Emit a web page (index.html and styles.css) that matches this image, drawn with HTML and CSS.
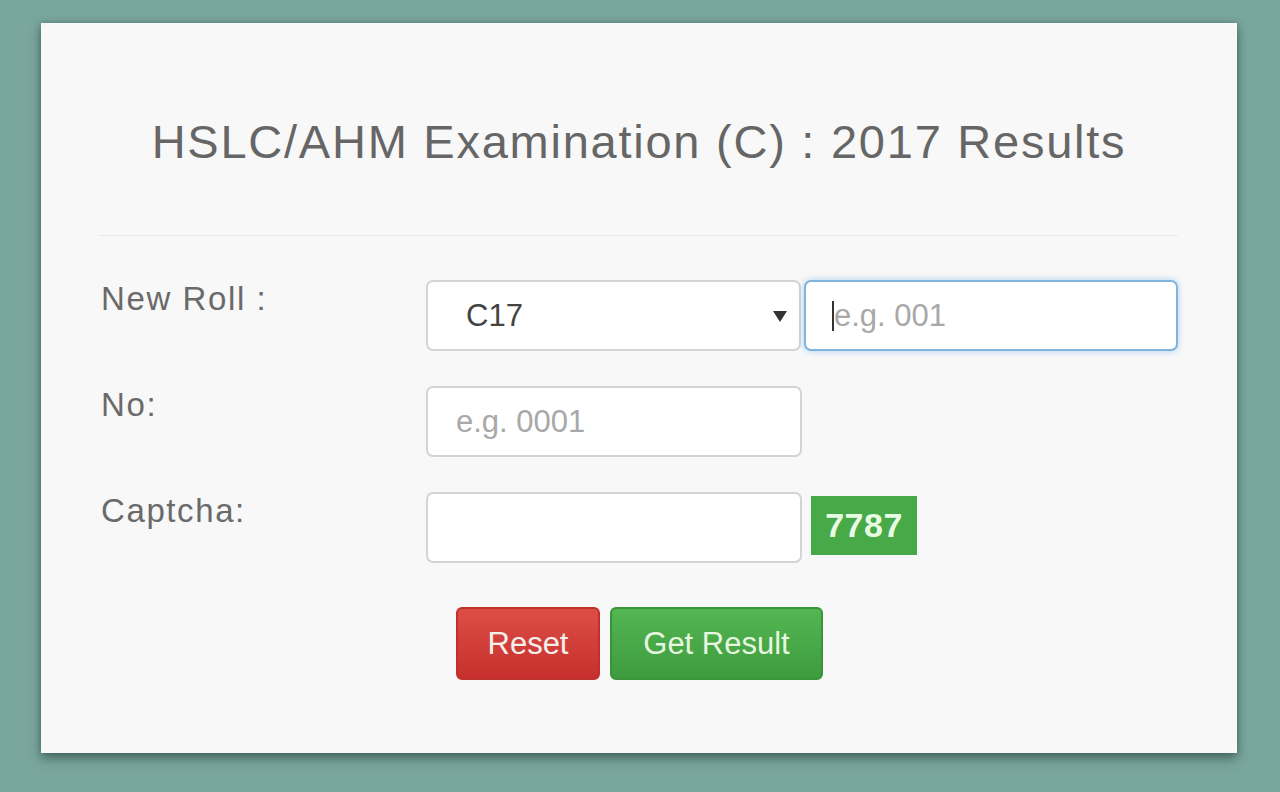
FILE: index.html
```html
<!DOCTYPE html>
<html>
<head>
<meta charset="utf-8">
<title>HSLC/AHM Examination (C) : 2017 Results</title>
<link rel="stylesheet" href="styles.css">
</head>
<body>
<div class="card">
  <h1 class="title">HSLC/AHM Examination (C) : 2017 Results</h1>
  <hr class="divider">
  <form class="form">
    <div class="row">
      <label class="label">New Roll :</label>
      <div class="controls">
        <div class="select-wrap">
          <select class="field select"><option>C17</option></select>
          <svg class="arrow" width="14" height="11" viewBox="0 0 14 11"><path d="M0 0 L14 0 L7 11 Z" fill="#333"/></svg>
        </div>
        <div class="focus-wrap">
          <input class="field focused" type="text" placeholder="e.g. 001">
          <span class="caret"></span>
        </div>
      </div>
    </div>
    <div class="row">
      <label class="label">No:</label>
      <div class="controls">
        <input class="field" type="text" placeholder="e.g. 0001">
      </div>
    </div>
    <div class="row">
      <label class="label">Captcha:</label>
      <div class="controls">
        <input class="field" type="text">
        <span class="captcha">7787</span>
      </div>
    </div>
    <div class="buttons">
      <button type="button" class="btn btn-reset">Reset</button>
      <button type="button" class="btn btn-get">Get Result</button>
    </div>
  </form>
</div>
</body>
</html>
```
FILE: styles.css
```css
html, body {
  margin: 0;
  padding: 0;
}
body {
  background: #79a69d;
  width: 1280px;
  height: 792px;
  overflow: hidden;
  font-family: "Liberation Sans", Arial, sans-serif;
  padding-top: 23px;
  padding-left: 41px;
  box-sizing: border-box;
}
.card {
  width: 1196px;
  height: 730px;
  background: #f8f8f8;
  box-sizing: border-box;
  padding: 0 59px 0 57px;
  box-shadow: 0 6px 10px rgba(40, 70, 60, 0.55), 0 0 6px rgba(40, 70, 60, 0.35);
}
.title {
  margin: 0;
  padding-top: 82px;
  height: 74px;
  line-height: 74px;
  text-align: center;
  font-weight: normal;
  font-size: 47px;
  letter-spacing: 1.75px;
  color: #666;
  padding-left: 2px;
}
.divider {
  margin: 56px 0 0 0;
  border: 0;
  border-top: 1px solid #e9e9e9;
  height: 0;
}
.form {
  margin-top: 44px;
}
.row {
  display: flex;
  align-items: flex-start;
  margin-bottom: 35px;
  height: 71px;
}
.label {
  width: 328px;
  padding-left: 3px;
  box-sizing: border-box;
  font-size: 33px;
  letter-spacing: 1.6px;
  color: #6a6a6a;
  line-height: 38px;
  padding-top: 0px;
}
.controls {
  display: flex;
  align-items: center;
  height: 71px;
  gap: 3px;
}
.field {
  width: 376px;
  height: 71px;
  box-sizing: border-box;
  border: 2px solid #d4d4d4;
  border-radius: 7px;
  background: #fff;
  font-family: "Liberation Sans", Arial, sans-serif;
  font-size: 31px;
  color: #555;
  padding: 0 28px;
  outline: none;
  margin: 0;
}
.field::placeholder {
  color: #a8a8a8;
}
.select-wrap {
  position: relative;
}
.select {
  appearance: none;
  -webkit-appearance: none;
  padding-left: 38px;
  color: #444;
  width: 375px;
}
.arrow {
  position: absolute;
  right: 14px;
  top: 31px;
}
.focus-wrap {
  position: relative;
}
.focused {
  width: 374px;
  border-color: #7fb4de;
  box-shadow: 0 0 6px rgba(102, 175, 233, 0.55);
}
.caret {
  position: absolute;
  left: 28px;
  top: 21px;
  width: 2px;
  height: 30px;
  background: #333;
}
.captcha {
  margin-left: 6px;
  margin-top: -4px;
  display: inline-block;
  width: 106px;
  height: 59px;
  line-height: 59px;
  text-align: center;
  background: #47a947;
  color: #e8fbe3;
  font-weight: bold;
  font-size: 34px;
  letter-spacing: 0.5px;
}
.buttons {
  display: flex;
  justify-content: flex-start;
  gap: 10px;
  padding-left: 358px;
  margin-top: 44px;
}
.btn {
  height: 73px;
  border-radius: 6px;
  font-family: "Liberation Sans", Arial, sans-serif;
  font-size: 31px;
  color: #f3f0ec;
  padding: 0;
  cursor: pointer;
}
.btn-reset {
  width: 144px;
  background: linear-gradient(#dd4d48, #c7302c);
  border: 2px solid #c0302c;
}
.btn-get {
  width: 213px;
  background: linear-gradient(#54b653, #3e9b3e);
  border: 2px solid #3b933b;
  color: #e6f7df;
}
```
